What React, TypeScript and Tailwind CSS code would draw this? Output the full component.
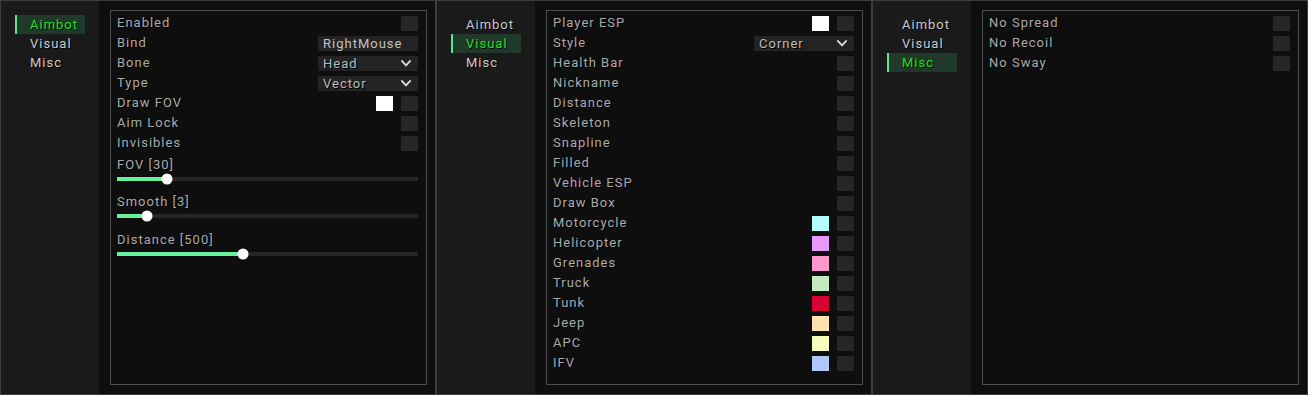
import React from "react";

type Row =
  | { kind: "check"; label: string; color?: string }
  | { kind: "input"; label: string; value: string }
  | { kind: "select"; label: string; value: string };

type Slider = { label: string; pct: number };

const tabs = ["Aimbot", "Visual", "Misc"];

function Chevron() {
  return (
    <svg width="10" height="7" viewBox="0 0 10 7" fill="none">
      <path d="M1 1.2 5 5.4 9 1.2" stroke="#d6d6d6" strokeWidth="2" strokeLinecap="square" />
    </svg>
  );
}

function Checkbox() {
  return <div className="w-[17px] h-[15px] bg-[#262626]" />;
}

function RowItem({ row }: { row: Row }) {
  return (
    <div className="flex items-center justify-between h-[20px]">
      <span className="text-[#ababab] [text-shadow:1px_1px_0_#000]">{row.label}</span>
      {row.kind === "check" && (
        <div className="flex items-center gap-[8px]">
          {row.color && <div className="w-[17px] h-[15px]" style={{ background: row.color }} />}
          <Checkbox />
        </div>
      )}
      {row.kind === "input" && (
        <div className="w-[100px] h-[15px] bg-[#232323] pl-[5px] flex items-center text-[#c2c2c2] leading-none">
          {row.value}
        </div>
      )}
      {row.kind === "select" && (
        <div className="w-[100px] h-[15px] bg-[#232323] pl-[5px] pr-[7px] flex items-center justify-between text-[#bdbdbd] leading-none [text-shadow:1px_1px_0_#000]">
          {row.value}
          <Chevron />
        </div>
      )}
    </div>
  );
}

function SliderItem({ s, idx }: { s: Slider; idx: number }) {
  return (
    <div className={idx === 0 ? "mt-[4px]" : idx === 1 ? "mt-[13px]" : "mt-[14px]"}>
      <div className="h-[16px] leading-[16px] text-[#ababab] [text-shadow:1px_1px_0_#000]">{s.label}</div>
      <div className="relative mt-[4px] h-[4px] bg-[#262626]">
        <div className="h-full bg-[#66f29c]" style={{ width: `${s.pct}%` }} />
        <div
          className="absolute top-1/2 w-[11px] h-[11px] -translate-x-1/2 -translate-y-1/2 rounded-full bg-white"
          style={{ left: `${s.pct}%` }}
        />
      </div>
    </div>
  );
}

function Panel({ active, rows, sliders = [] }: { active: number; rows: Row[]; sliders?: Slider[] }) {
  return (
    <div className="flex w-[436px] h-[395px] border border-[#3d3d3d]">
      <div className="w-[98px] bg-[#1a1a1a] pt-[14px] pl-[14px]">
        {tabs.map((t, i) =>
          i === active ? (
            <div
              key={t}
              className="w-[70px] h-[19px] flex items-center border-l-2 border-[#5ce38d] bg-[#20392a] pl-[13px] text-[#1fe01f] [text-shadow:1px_1px_0_#000]"
            >
              {t}
            </div>
          ) : (
            <div key={t} className="w-[70px] h-[19px] flex items-center pl-[15px] text-[#cbcbcb] [text-shadow:1px_1px_0_#000]">
              {t}
            </div>
          )
        )}
      </div>
      <div className="flex-1 bg-[#0e0e0e] pl-[11px] pr-[8px] py-[9px]">
        <div className="h-full border border-[#4d4d4d] pt-[2px] pl-[6px] pr-[8px]">
          {rows.map((r) => (
            <RowItem key={r.label} row={r} />
          ))}
          {sliders.map((s, i) => (
            <SliderItem key={s.label} s={s} idx={i} />
          ))}
        </div>
      </div>
    </div>
  );
}

const aimbotRows: Row[] = [
  { kind: "check", label: "Enabled" },
  { kind: "input", label: "Bind", value: "RightMouse" },
  { kind: "select", label: "Bone", value: "Head" },
  { kind: "select", label: "Type", value: "Vector" },
  { kind: "check", label: "Draw FOV", color: "#ffffff" },
  { kind: "check", label: "Aim Lock" },
  { kind: "check", label: "Invisibles" },
];

const aimbotSliders: Slider[] = [
  { label: "FOV [30]", pct: 16.7 },
  { label: "Smooth [3]", pct: 10 },
  { label: "Distance [500]", pct: 42 },
];

const visualRows: Row[] = [
  { kind: "check", label: "Player ESP", color: "#ffffff" },
  { kind: "select", label: "Style", value: "Corner" },
  { kind: "check", label: "Health Bar" },
  { kind: "check", label: "Nickname" },
  { kind: "check", label: "Distance" },
  { kind: "check", label: "Skeleton" },
  { kind: "check", label: "Snapline" },
  { kind: "check", label: "Filled" },
  { kind: "check", label: "Vehicle ESP" },
  { kind: "check", label: "Draw Box" },
  { kind: "check", label: "Motorcycle", color: "#b3fffc" },
  { kind: "check", label: "Helicopter", color: "#e698fb" },
  { kind: "check", label: "Grenades", color: "#fd98cf" },
  { kind: "check", label: "Truck", color: "#c4ebc0" },
  { kind: "check", label: "Tunk", color: "#d8002e" },
  { kind: "check", label: "Jeep", color: "#ffe2b0" },
  { kind: "check", label: "APC", color: "#f5fbbb" },
  { kind: "check", label: "IFV", color: "#b0c8f7" },
];

const miscRows: Row[] = [
  { kind: "check", label: "No Spread" },
  { kind: "check", label: "No Recoil" },
  { kind: "check", label: "No Sway" },
];

export default function App() {
  return (
    <div className="flex w-[1308px] h-[395px] bg-[#0e0e0e] font-['Roboto',sans-serif] text-[13px] tracking-[1px]">
      <Panel active={0} rows={aimbotRows} sliders={aimbotSliders} />
      <Panel active={1} rows={visualRows} />
      <Panel active={2} rows={miscRows} />
    </div>
  );
}
